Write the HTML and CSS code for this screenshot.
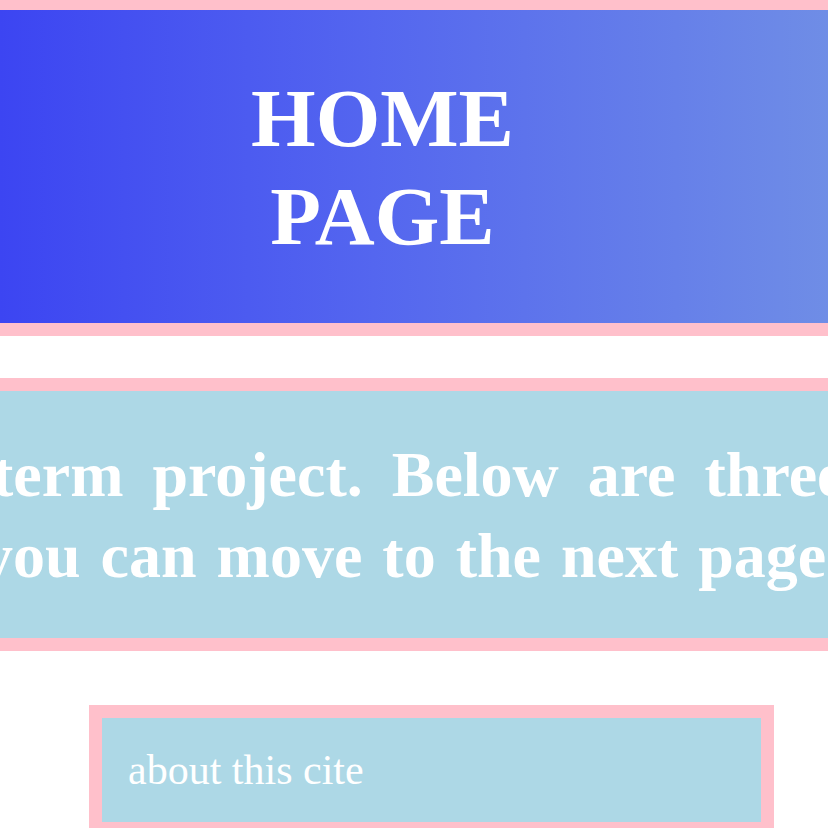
FILE: index.html
```html
<!DOCTYPE html>
<html lang="en">
<head>
<meta charset="utf-8">
<title>Home Page</title>
<link rel="stylesheet" href="styles.css">
</head>
<body>
<header class="banner">
  <h1 class="banner-title">HOME<br>PAGE</h1>
</header>
<section class="intro">
  <p class="intro-text">
    <span class="intro-line intro-line-1">term project. Below are three links</span>
    <span class="intro-line intro-line-2">you can move to the next page with</span>
  </p>
</section>
<nav class="links">
  <a class="link-box" href="#about">about this cite</a>
</nav>
</body>
</html>
```
FILE: styles.css
```css
html, body {
  margin: 0;
  padding: 0;
  background: #ffffff;
  overflow: hidden;
}

body {
  width: 828px;
  height: 828px;
  font-family: "Liberation Serif", "Times New Roman", serif;
}

.banner {
  margin: -3px -13px 0;
  border: 13px solid #ffc0cb;
  background: linear-gradient(to right, #3c45f2 0%, #5466ef 45%, #6f8de6 100%);
  padding: 59px 0 58px;
}

.banner-title {
  margin: 0;
  padding: 0 63px 0 0;
  text-align: center;
  color: #ffffff;
  font-size: 83px;
  line-height: 98px;
  font-weight: bold;
}

.intro {
  margin: 42px -13px 0;
  border: 13px solid #ffc0cb;
  background: #add8e6;
  padding: 43px 0 42px;
}

.intro-text {
  margin: 0;
  color: #ffffff;
  font-size: 64px;
  line-height: 81px;
  font-weight: bold;
}

.intro-line {
  display: block;
  white-space: nowrap;
}

.intro-line-1 {
  margin-left: -8px;
  word-spacing: 13px;
}

.intro-line-2 {
  margin-left: -19px;
  word-spacing: 4px;
}

.links {
  padding: 54px 54px 0 89px;
}

.link-box {
  display: block;
  border: 13px solid #ffc0cb;
  background: #add8e6;
  padding: 28px 26px;
  box-sizing: content-box;
  color: #ffffff;
  text-decoration: none;
  font-size: 42px;
  line-height: 48px;
  width: 607px;
}
```
